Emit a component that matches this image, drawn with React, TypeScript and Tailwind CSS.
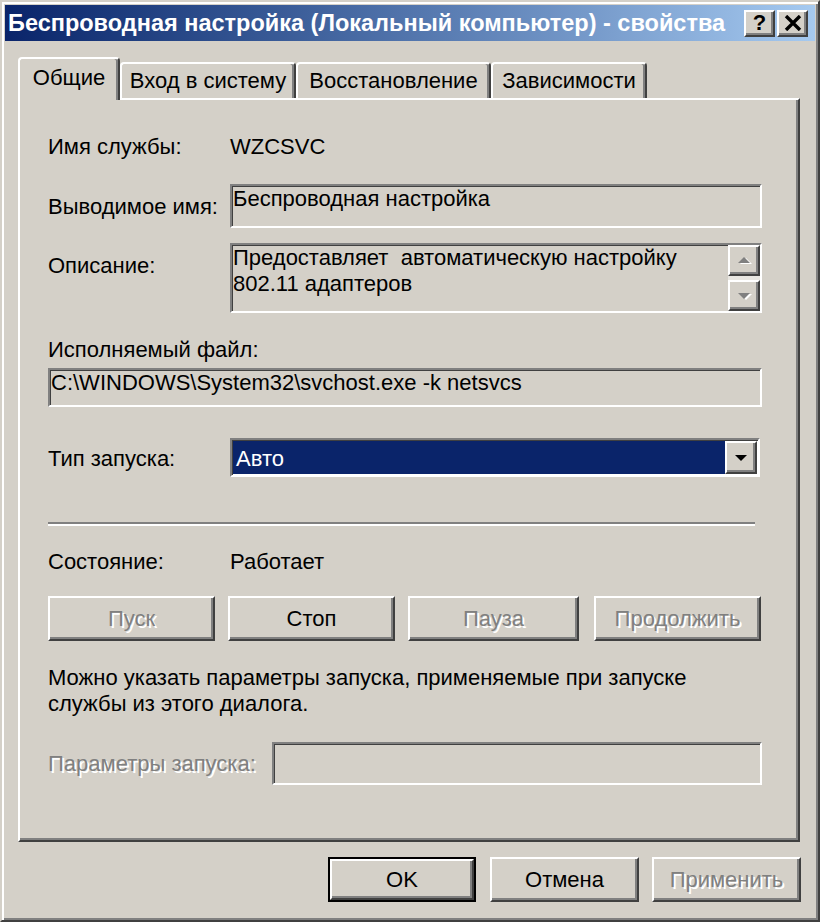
import React from "react";

const raised =
  "border-2 border-t-white border-l-white border-r-[#404040] border-b-[#404040] shadow-[inset_-2px_-2px_0_#808080]";
const sunken =
  "border-2 border-t-[#808080] border-l-[#808080] border-r-white border-b-white shadow-[inset_1px_1px_0_#404040]";
const disabledText = "text-[#808080] [text-shadow:2px_2px_0_#ffffff]";

const Button = ({
  label,
  width,
  disabled,
  className = "",
}: {
  label: string;
  width: string;
  disabled?: boolean;
  className?: string;
}) => (
  <div
    className={`${raised} ${width} h-[45px] flex items-center justify-center bg-[#d4d0c8] ${
      disabled ? disabledText : "text-black"
    } ${className}`}
  >
    {label}
  </div>
);

const Tab = ({ label, width, active }: { label: string; width: string; active?: boolean }) => (
  <div
    className={`${width} flex items-center justify-center bg-[#d4d0c8] rounded-t-[4px] border-t-2 border-l-2 border-r-2 border-t-white border-l-white border-r-[#404040] shadow-[inset_-2px_0_0_#808080] ${
      active ? "h-[43px] -mb-[2px] relative z-10 pb-[4px]" : "h-[36px]"
    }`}
  >
    {label}
  </div>
);

const Arrow = ({ up, disabled }: { up?: boolean; disabled?: boolean }) => (
  <svg width="16" height="10" viewBox="0 0 16 10">
    {disabled && <polygon points={up ? "10,2 16,8 4,8" : "4,3 16,3 10,9"} fill="#ffffff" />}
    <polygon points={up ? "8,1 14,7 2,7" : "2,2 14,2 8,8"} fill={disabled ? "#808080" : "#000000"} />
  </svg>
);

export default function App() {
  return (
    <div className="w-[820px] h-[922px] bg-[#d4d0c8] border-2 border-t-[#d4d0c8] border-l-[#d4d0c8] border-r-[#404040] border-b-[#404040] shadow-[inset_2px_2px_0_#ffffff,inset_-2px_-2px_0_#808080] p-[3px] font-['Liberation_Sans',Arial,sans-serif] text-[22px] text-black leading-[26px] overflow-hidden">
      {/* title bar */}
      <div className="h-[36px] flex items-center bg-gradient-to-r from-[#0a246a] to-[#a6caf0] pl-[3px] pr-[7px]">
        <span className="flex-1 text-white font-bold text-[23.5px] whitespace-nowrap overflow-hidden">
          Беспроводная настройка (Локальный компьютер) - свойства
        </span>
        <div className={`${raised} w-[31px] h-[27px] bg-[#d4d0c8] flex items-center justify-center font-bold text-[22px] leading-none`}>
          ?
        </div>
        <div className={`${raised} w-[31px] h-[27px] bg-[#d4d0c8] flex items-center justify-center ml-[2px]`}>
          <svg width="18" height="16" viewBox="0 0 18 16">
            <path d="M2 1 L16 15 M16 1 L2 15" stroke="#000" strokeWidth="3.4" />
          </svg>
        </div>
      </div>

      {/* tabs */}
      <div className="ml-[13px] mt-[16px] h-[41px] flex items-end">
        <Tab label="Общие" width="w-[102px]" active />
        <Tab label="Вход в систему" width="w-[176px]" />
        <Tab label="Восстановление" width="w-[195px]" />
        <Tab label="Зависимости" width="w-[156px]" />
      </div>

      {/* panel */}
      <div className="ml-[13px] w-[782px] h-[744px] border-2 border-t-white border-l-white border-r-[#404040] border-b-[#404040] shadow-[inset_-2px_-2px_0_#808080] pl-[28px] pr-[36px] pt-[34px] flex flex-col">
        <div className="flex h-[26px]">
          <span className="w-[182px]">Имя службы:</span>
          <span>WZCSVC</span>
        </div>

        <div className="flex mt-[24px]">
          <span className="w-[182px] pt-[10px]">Выводимое имя:</span>
          <div className={`${sunken} flex-1 h-[44px] pl-[1px]`}>Беспроводная настройка</div>
        </div>

        <div className="flex mt-[15px]">
          <span className="w-[182px] pt-[10px]">Описание:</span>
          <div className={`${sunken} flex-1 h-[70px] flex`}>
            <div className="flex-1 pl-[1px] whitespace-nowrap overflow-hidden">
              Предоставляет&nbsp; автоматическую настройку
              <br />
              802.11 адаптеров
            </div>
            <div className="w-[32px] flex flex-col justify-between bg-[#e8e6e1]">
              <div className={`${raised} h-[31px] bg-[#d4d0c8] flex items-center justify-center`}>
                <Arrow up disabled />
              </div>
              <div className={`${raised} h-[31px] bg-[#d4d0c8] flex items-center justify-center`}>
                <Arrow disabled />
              </div>
            </div>
          </div>
        </div>

        <div className="mt-[24px] h-[26px]">Исполняемый файл:</div>
        <div className={`${sunken} mt-[5px] h-[39px] pl-[1px] whitespace-nowrap`}>
          C:\WINDOWS\System32\svchost.exe -k netsvcs
        </div>

        <div className="flex mt-[31px]">
          <span className="w-[182px] pt-[8px]">Тип запуска:</span>
          <div className={`${sunken} flex-1 mr-[2px] h-[39px] bg-white flex p-[1px]`}>
            <div className="flex-1 bg-[#0a246a] text-white pl-[3px] pt-[5px] leading-[26px]">Авто</div>
            <div className={`${raised} w-[32px] bg-[#d4d0c8] flex items-center justify-center`}>
              <Arrow />
            </div>
          </div>
        </div>

        <div className="mt-[45px] w-[707px] border-t-2 border-b-2 border-t-[#808080] border-b-white" />

        <div className="flex mt-[23px] h-[26px]">
          <span className="w-[182px]">Состояние:</span>
          <span>Работает</span>
        </div>

        <div className="flex mt-[21px]">
          <Button label="Пуск" width="w-[167px]" disabled />
          <Button label="Стоп" width="w-[167px]" className="ml-[13px]" />
          <Button label="Пауза" width="w-[171px]" disabled className="ml-[13px]" />
          <Button label="Продолжить" width="w-[167px]" disabled className="ml-[15px]" />
        </div>

        <div className="mt-[24px] whitespace-nowrap">
          Можно указать параметры запуска, применяемые при запуске
          <br />
          службы из этого диалога.
        </div>

        <div className="flex mt-[25px]">
          <span className={`w-[224px] pt-[9px] whitespace-nowrap ${disabledText}`}>Параметры запуска:</span>
          <div className={`${sunken} flex-1 h-[43px]`} />
        </div>
      </div>

      {/* dialog buttons */}
      <div className="mt-[15px] flex justify-end pr-[14px]">
        <div className="w-[148px] h-[45px] border-2 border-black">
          <div className={`${raised} h-full flex items-center justify-center`}>OK</div>
        </div>
        <Button label="Отмена" width="w-[149px]" className="ml-[14px]" />
        <Button label="Применить" width="w-[149px]" disabled className="ml-[13px]" />
      </div>
    </div>
  );
}
